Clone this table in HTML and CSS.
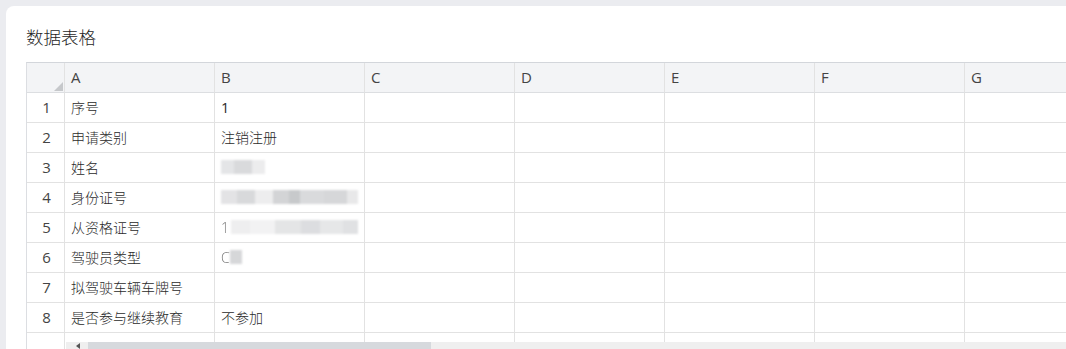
FILE: index.html
```html
<!DOCTYPE html>
<html lang="zh-CN">
<head>
<meta charset="utf-8">
<title>数据表格</title>
<link rel="stylesheet" href="styles.css">
</head>
<body>
<div class="card">
  <h2 class="card-title">数据表格</h2>
  <div class="sheet">
    <div class="grid">
      <div class="cell corner"></div>
      <div class="cell col-head">A</div>
      <div class="cell col-head">B</div>
      <div class="cell col-head">C</div>
      <div class="cell col-head">D</div>
      <div class="cell col-head">E</div>
      <div class="cell col-head">F</div>
      <div class="cell col-head">G</div>

      <div class="cell row-head">1</div>
      <div class="cell">序号</div>
      <div class="cell num">1</div>
      <div class="cell"></div><div class="cell"></div><div class="cell"></div><div class="cell"></div><div class="cell"></div>

      <div class="cell row-head">2</div>
      <div class="cell">申请类别</div>
      <div class="cell">注销注册</div>
      <div class="cell"></div><div class="cell"></div><div class="cell"></div><div class="cell"></div><div class="cell"></div>

      <div class="cell row-head">3</div>
      <div class="cell">姓名</div>
      <div class="cell"><span class="masked mask-name"></span></div>
      <div class="cell"></div><div class="cell"></div><div class="cell"></div><div class="cell"></div><div class="cell"></div>

      <div class="cell row-head">4</div>
      <div class="cell">身份证号</div>
      <div class="cell"><span class="masked mask-id"></span></div>
      <div class="cell"></div><div class="cell"></div><div class="cell"></div><div class="cell"></div><div class="cell"></div>

      <div class="cell row-head">5</div>
      <div class="cell">从资格证号</div>
      <div class="cell"><span class="lead">1</span><span class="masked mask-cert"></span></div>
      <div class="cell"></div><div class="cell"></div><div class="cell"></div><div class="cell"></div><div class="cell"></div>

      <div class="cell row-head">6</div>
      <div class="cell">驾驶员类型</div>
      <div class="cell"><span class="lead">C</span><span class="masked mask-type"></span></div>
      <div class="cell"></div><div class="cell"></div><div class="cell"></div><div class="cell"></div><div class="cell"></div>

      <div class="cell row-head">7</div>
      <div class="cell">拟驾驶车辆车牌号</div>
      <div class="cell"></div>
      <div class="cell"></div><div class="cell"></div><div class="cell"></div><div class="cell"></div><div class="cell"></div>

      <div class="cell row-head">8</div>
      <div class="cell">是否参与继续教育</div>
      <div class="cell">不参加</div>
      <div class="cell"></div><div class="cell"></div><div class="cell"></div><div class="cell"></div><div class="cell"></div>

      <div class="cell row-head"></div>
      <div class="cell"></div>
      <div class="cell"></div>
      <div class="cell"></div><div class="cell"></div><div class="cell"></div><div class="cell"></div><div class="cell"></div>
    </div>
    <div class="hscroll">
      <span class="hscroll-arrow"></span>
      <span class="hscroll-thumb"></span>
    </div>
  </div>
</div>
</body>
</html>
```

FILE: styles.css
```css
html, body {
  margin: 0;
  height: 100%;
  overflow: hidden;
}

body {
  background: #ebecf0;
  padding: 6px 0 0 6px;
  box-sizing: border-box;
  font-family: "Noto Sans CJK SC", "Noto Sans", sans-serif;
  color: #333;
}

.card {
  background: #fff;
  border-radius: 8px;
  width: 1120px;
  height: 420px;
  padding: 18px 0 0 20px;
  box-sizing: border-box;
}

.card-title {
  margin: 0 0 13px;
  font-size: 17.5px;
  line-height: 25px;
  font-weight: 300;
  color: #1f1f1f;
}

.sheet {
  position: relative;
  height: 287px;
  overflow: hidden;
  border-top: 1px solid #d3d6db;
  border-left: 1px solid #dcdee2;
}

.grid {
  display: grid;
  grid-template-columns: 38px repeat(7, 150px);
  grid-auto-rows: 30px;
}

.cell {
  box-sizing: border-box;
  border-right: 1px solid #e2e2e2;
  border-bottom: 1px solid #e2e2e2;
  display: flex;
  align-items: center;
  padding: 0 6px 1px;
  font-size: 14px;
  font-weight: 300;
  color: #2a2a2a;
  white-space: nowrap;
  overflow: hidden;
}

.num {
  font-family: "Open Sans", "Noto Sans", sans-serif;
  font-weight: 400;
  font-size: 14.5px;
}

.corner,
.col-head {
  background: #f3f4f6;
  border-bottom-color: #dcdee1;
}

.col-head {
  color: #444;
  font-family: "Open Sans", "Noto Sans", sans-serif;
  font-weight: 400;
  font-size: 15px;
  padding-left: 6px;
}

.corner {
  position: relative;
}

.corner::after {
  content: "";
  position: absolute;
  right: 1px;
  bottom: 1px;
  width: 0;
  height: 0;
  border-style: solid;
  border-width: 0 0 9px 9px;
  border-color: transparent transparent #c6c8cb transparent;
}

.row-head {
  justify-content: center;
  padding: 0 0 1px 2px;
  color: #444;
  font-family: "Open Sans", "Noto Sans", sans-serif;
  font-weight: 400;
  font-size: 15px;
}

.lead {
  color: #777;
  font-family: "Open Sans", "Noto Sans", sans-serif;
  font-size: 14px;
  filter: blur(0.7px);
}

/* Masked personal data */
.masked {
  display: inline-block;
  height: 14px;
  filter: blur(1.2px);
}

.mask-name {
  width: 44px;
  background: linear-gradient(90deg, #e4e5e7 0 30%, #d9dadc 30% 70%, #ececed 70%);
}

.mask-id {
  width: 140px;
  background: linear-gradient(90deg,
    #e3e3e5 0 12%, #d8d9db 12% 25%, #ededee 25% 38%,
    #d3d4d6 38% 50%, #c7c9cb 50% 58%, #d9dadc 58% 75%,
    #d6d7d9 75% 92%, #e8e8e9 92%);
}

.mask-cert {
  width: 130px;
  margin-left: 2px;
  background: linear-gradient(90deg,
    #eeeeef 0 15%, #f2f2f3 15% 35%, #e4e5e6 35% 55%,
    #dcdde0 55% 70%, #e6e7e8 70% 88%, #e0e1e3 88%);
}

.mask-type {
  width: 12px;
  margin-left: 0;
  background: #d6d7d9;
}

.hscroll {
  position: absolute;
  left: 39px;
  right: 0;
  bottom: 0;
  height: 8px;
  background: #efefef;
}

.hscroll-arrow {
  position: absolute;
  left: 10px;
  top: 1px;
  width: 0;
  height: 0;
  border-style: solid;
  border-width: 3px 4px 3px 0;
  border-color: transparent #555 transparent transparent;
}

.hscroll-thumb {
  position: absolute;
  left: 22px;
  top: 0;
  width: 343px;
  height: 100%;
  background: #d6d9dd;
}
```
